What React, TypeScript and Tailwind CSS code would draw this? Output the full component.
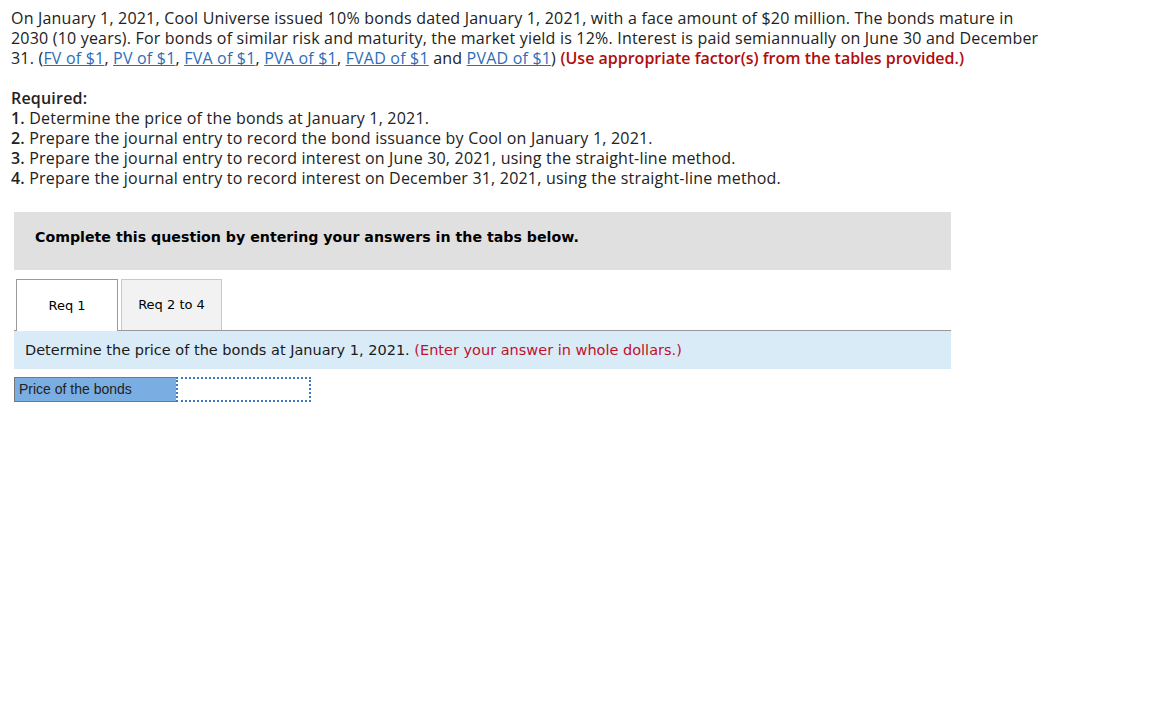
import React from 'react'

const links = ['FV of $1', 'PV of $1', 'FVA of $1', 'PVA of $1', 'FVAD of $1']

export default function App() {
  return (
    <div className="min-h-screen bg-white pl-[11px] pt-[8px] text-[#222]">
      {/* problem text */}
      <div className="w-[1120px] font-['Open_Sans',sans-serif] text-[16px] leading-[20px] tracking-[0.2px]">
        <p>
          On January 1, 2021, Cool Universe issued 10% bonds dated January 1, 2021, with a face amount of $20 million. The bonds mature in
          <br />
          2030 (10 years). For bonds of similar risk and maturity, the market yield is 12%. Interest is paid semiannually on June 30 and December
          <br />
          31. (
          {links.map((l, i) => (
            <span key={l}>
              <a className="text-[#2e6db5] underline">{l}</a>
              {i < links.length - 1 ? ', ' : ' '}
            </span>
          ))}
          and <a className="text-[#2e6db5] underline">PVAD of $1</a>){' '}
          <span className="font-semibold tracking-normal text-[#b00c0c]">(Use appropriate factor(s) from the tables provided.)</span>
        </p>
        <div className="mt-[20px]">
          <p className="font-semibold">Required:</p>
          <p><span className="font-semibold">1.</span> Determine the price of the bonds at January 1, 2021.</p>
          <p><span className="font-semibold">2.</span> Prepare the journal entry to record the bond issuance by Cool on January 1, 2021.</p>
          <p><span className="font-semibold">3.</span> Prepare the journal entry to record interest on June 30, 2021, using the straight-line method.</p>
          <p><span className="font-semibold">4.</span> Prepare the journal entry to record interest on December 31, 2021, using the straight-line method.</p>
        </div>
      </div>

      {/* answer area */}
      <div className="ml-[3px] mt-[24px] w-[937px] font-['DejaVu_Sans',Verdana,sans-serif]">
        <div className="flex h-[58px] items-center bg-[#e0e0e0] px-[21px] pb-[6px] text-[14.2px] font-bold text-black">
          Complete this question by entering your answers in the tabs below.
        </div>

        <div className="mt-[9px] flex items-end gap-[3px] border-b border-[#999] pl-[2px]">
          <div className="-mb-px flex h-[52px] w-[102px] items-center justify-center border border-b-0 border-[#999] bg-white text-[13px] text-black">
            Req 1
          </div>
          <div className="flex h-[51px] w-[101px] items-center justify-center border border-b-0 border-[#c8c8c8] bg-[#f2f2f2] text-[13px] text-black">
            Req 2 to 4
          </div>
        </div>

        <div className="flex h-[38px] items-center bg-[#daebf8] px-[11px] pt-[2px] text-[14.5px] text-[#1a1a1a]">
          <span>
            Determine the price of the bonds at January 1, 2021.{' '}
            <span className="text-[#c0102a]">(Enter your answer in whole dollars.)</span>
          </span>
        </div>

        <div className="mt-[8px] flex h-[25px]">
          <div className="flex w-[162px] items-center border border-r-0 border-[#777] bg-[#7aaee3] pl-[4px] font-['Liberation_Sans',Arial,sans-serif] text-[14px] text-[#222]">
            Price of the bonds
          </div>
          <div className="w-[135px] border-2 border-dotted border-[#3a78c2] bg-white" />
        </div>
      </div>
    </div>
  )
}
